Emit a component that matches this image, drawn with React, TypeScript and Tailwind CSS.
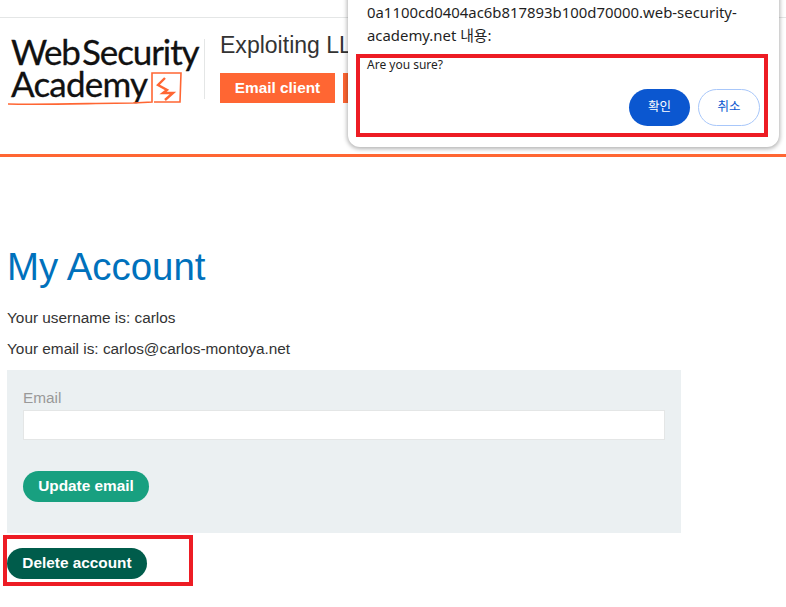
const sans = "font-['Liberation_Sans',Arial,sans-serif]";

function Logo() {
  return (
    <svg width="192" height="80" viewBox="0 0 192 80" className="mt-px shrink-0">
      <g fontFamily="Lato, sans-serif" fontSize="35" fill="#111" stroke="#111" strokeWidth="0.3">
        <text x="3" y="33" letterSpacing="-1.2">
          Web
        </text>
        <text x="74" y="33" letterSpacing="-1.1">
          Security
        </text>
        <text x="3" y="65" letterSpacing="-0.8">
          Academy
        </text>
      </g>
      <path d="M0 72 C40 73 90 71 125 71 L144 70 L144 41 L173 41 L172 70 L146 70" fill="none" stroke="#ff6633" strokeWidth="1.6" />
      <path d="M157 46 L150 53 L159 58 L155 61 L165 61 L157 68" fill="none" stroke="#ff6633" strokeWidth="2.4" />
    </svg>
  );
}

export default function App() {
  return (
    <div className={`relative h-[607px] w-[786px] overflow-hidden bg-white text-[#333] ${sans}`}>
      <header className="mt-[17px] flex h-[140px] items-start border-t border-b-[3px] border-t-[#e4e6e6] border-b-[#ff6633] pt-[13px] pl-2">
        <Logo />
        <div className="mt-2 ml-1 h-[60px] w-px bg-[#e4e6e6]" />
        <div className="ml-[15px] flex flex-col gap-[14px]">
          <h2 className="whitespace-nowrap text-[23.04px] leading-[28px]">Exploiting LLM APIs with excessive agency</h2>
          <div className="flex gap-2">
            <span className="flex h-[30px] w-[115px] items-center justify-center bg-[#ff6633] text-[15.36px] font-bold text-white">
              Email client
            </span>
            <span className="flex h-[30px] w-[130px] items-center justify-center bg-[#ff6633] text-[15.36px] font-bold text-white">
              Backend AI logs
            </span>
          </div>
        </div>
      </header>

      <main className="pl-[7px]">
        <h1 className="mt-[85px] text-[38.4px] leading-[50px] text-[#0071bc]">My Account</h1>
        <p className="mt-4 text-[15.36px] leading-[20px]">Your username is: carlos</p>
        <p className="mt-[11px] text-[15.36px] leading-[20px]">Your email is: carlos@carlos-montoya.net</p>
        <form className="mt-[11px] h-[163px] w-[674px] bg-[#ebf0f2] px-4 pt-[19px]">
          <label className="block text-[15.36px] leading-[18px] text-[#999]">Email</label>
          <div className="mt-[3px] h-[30px] w-[642px] border border-[#e4e6e6] bg-white" />
          <div className="mt-[31px] flex h-[31px] w-[126px] items-center justify-center rounded-[15.5px] bg-[#18a080] pb-px text-[15.36px] font-bold text-white">
            Update email
          </div>
        </form>
        <div className="mt-[15px] flex h-[31px] w-[140px] items-center justify-center rounded-[15.5px] bg-[#005c4b] pb-px text-[15.36px] font-bold text-white">
          Delete account
        </div>
      </main>

      {/* browser confirm dialog */}
      <div className="absolute top-[-10px] left-[348px] h-[157px] w-[431px] rounded-b-[12px] bg-white px-[19px] pt-[11px] font-['Noto_Sans','Noto_Sans_CJK_KR',sans-serif] text-[#1f1f1f] shadow-[0_1px_4px_1px_rgba(0,0,0,0.3)]">
        <p className="w-[390px] text-[14.9px] leading-[23px] break-words">
          0a1100cd0404ac6b817893b100d70000.web-security-academy.net 내용:
        </p>
        <p className="mt-[11px] text-[12px] leading-[14px]">Are you sure?</p>
        <div className="mt-[17px] flex justify-end gap-2 text-[12.5px]">
          <span className="flex h-[37px] w-[61px] items-center justify-center rounded-[18.5px] bg-[#0b57d0] text-white">확인</span>
          <span className="flex h-[37px] w-[62px] items-center justify-center rounded-[18.5px] border border-[#a8c7fa] text-[#0b57d0]">취소</span>
        </div>
      </div>

      {/* red annotation boxes */}
      <div className="absolute top-[54px] left-[356px] h-[83px] w-[412px] border-4 border-[#ed1c24]" />
      <div className="absolute top-[535px] left-[3px] h-[51px] w-[190px] border-4 border-[#ed1c24]" />
    </div>
  );
}
